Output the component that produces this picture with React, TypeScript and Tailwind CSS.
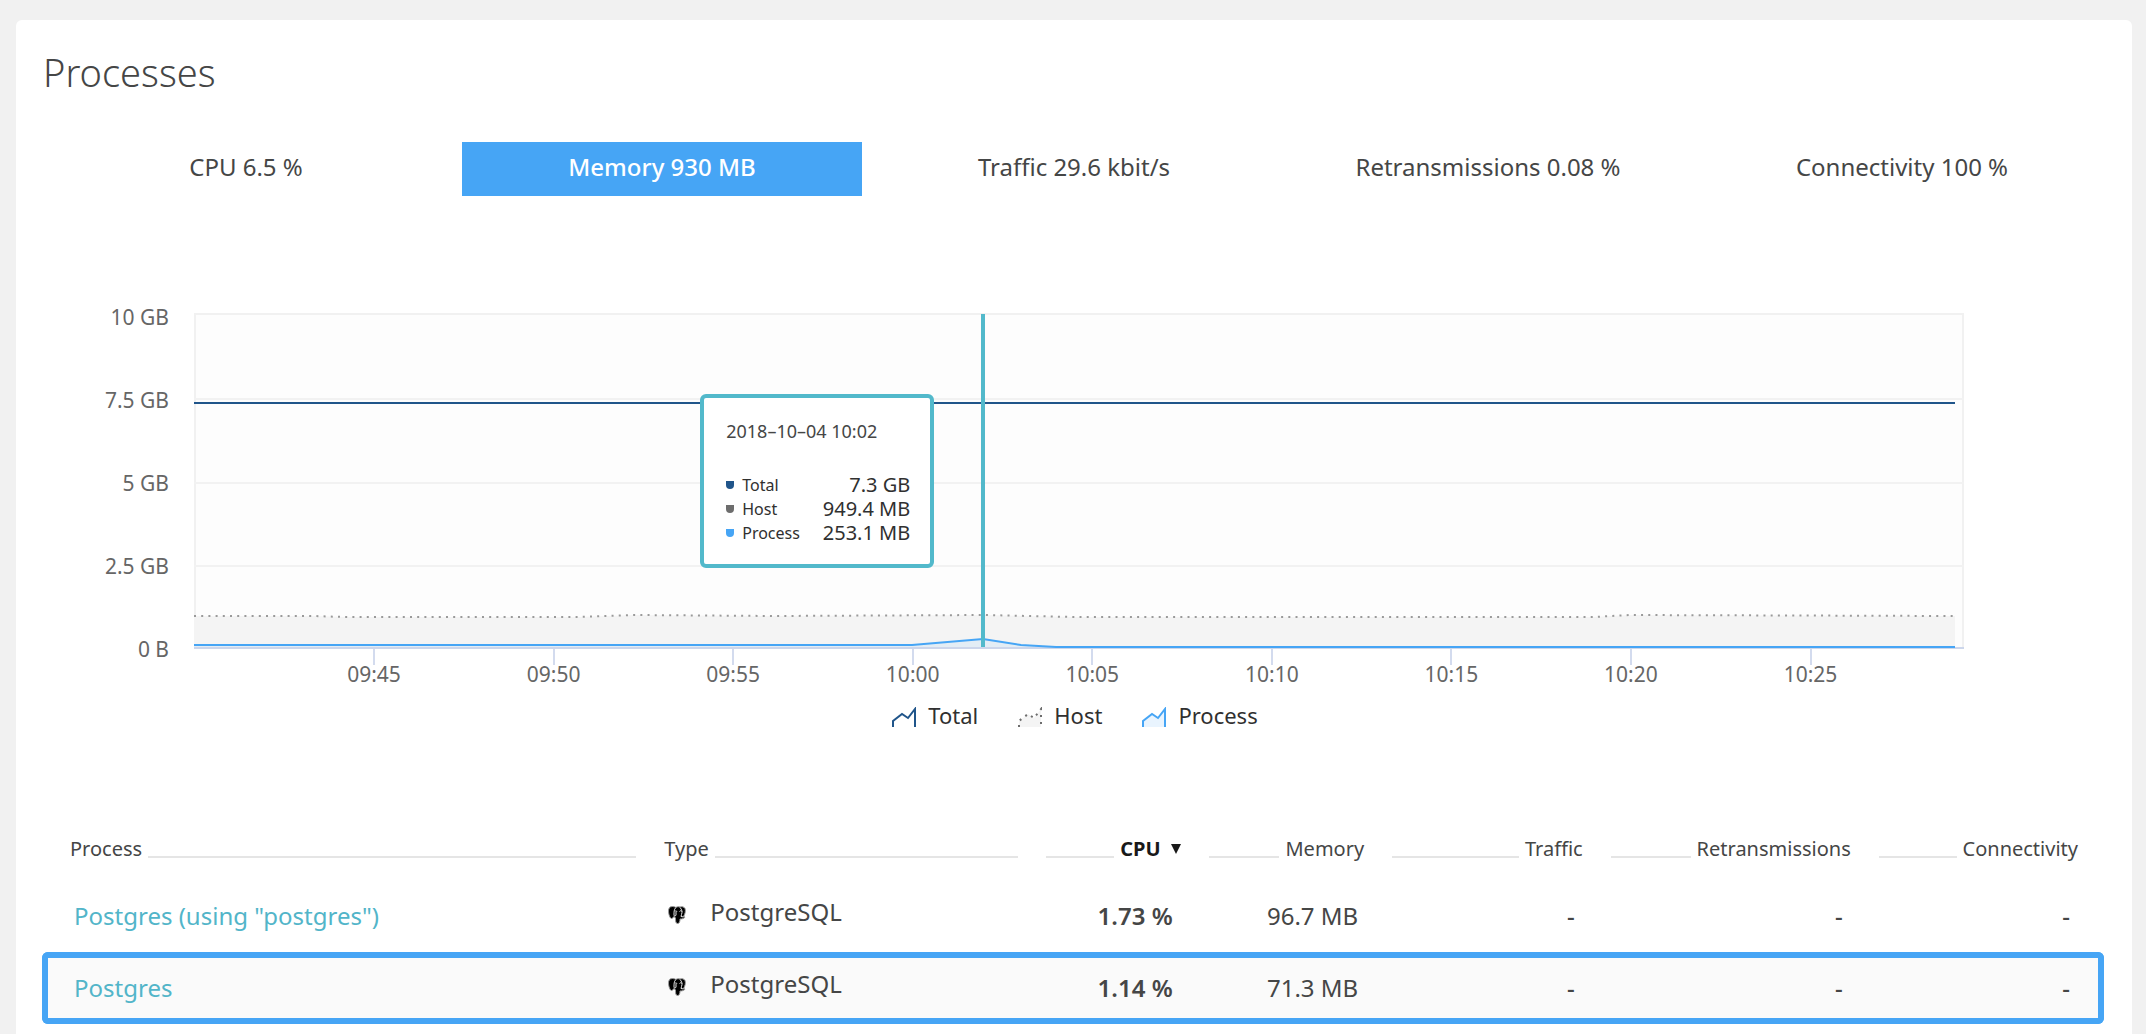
import React, { useState } from "react";

const metrics = [
  "CPU 6.5 %",
  "Memory 930 MB",
  "Traffic 29.6 kbit/s",
  "Retransmissions 0.08 %",
  "Connectivity 100 %",
];

const yTicks = ["10 GB", "7.5 GB", "5 GB", "2.5 GB", "0 B"];
const xTicks = ["09:45", "09:50", "09:55", "10:00", "10:05", "10:10", "10:15", "10:20", "10:25"];

const tooltipRows = [
  { label: "Total", value: "7.3 GB", dot: "bg-[#20558a]" },
  { label: "Host", value: "949.4 MB", dot: "bg-[#6d6d6d]" },
  { label: "Process", value: "253.1 MB", dot: "bg-[#46a5f5]" },
];

const legend = [
  { label: "Total", stroke: "#20558a", fill: "none", dash: undefined },
  { label: "Host", stroke: "#6d6d6d", fill: "#f4f4f4", dash: "2 5" },
  { label: "Process", stroke: "#46a5f5", fill: "#e9f4fe", dash: undefined },
];

const columns = [
  { label: "Process", width: "w-[29.5%]", left: true },
  { label: "Type", width: "w-[18.5%]", left: true },
  { label: "CPU", width: "w-[7.9%]", sorted: true },
  { label: "Memory", width: "w-[8.9%]" },
  { label: "Traffic", width: "w-[10.6%]" },
  { label: "Retransmissions", width: "w-[13%]" },
  { label: "Connectivity", width: "w-[11.6%]" },
];

const rows = [
  { name: 'Postgres (using "postgres")', cpu: "1.73 %", memory: "96.7 MB", selected: false },
  { name: "Postgres", cpu: "1.14 %", memory: "71.3 MB", selected: true },
];

const HOST = "0,303 120,303 150,304 385,304 440,302 580,303 790,302 880,304 1180,304 1400,304 1435,302 1761,303";
const PROCESS = "0,332 718,332 789,326 827,332 862,334 1761,334";

function ElephantIcon() {
  return (
    <svg className="mt-1.5 h-[18px] w-[18px]" viewBox="0 0 36 36" aria-hidden="true">
      <path
        d="M9 1C3 1 1 5 1 10C1 16 4 25 7 25C9 25 10 23 12 21L15 24C15 29 15 35 19 35C23 35 24 31 24 26C28 26 33 25 34 22L31 21C34 17 36 9 34 5C32 1 27 1 24 2C21 1 18 1 16 3C14 2 12 1 9 1Z"
        fill="#000"
        stroke="#9a9a9a"
        strokeWidth="2"
      />
      <path
        d="M15 4C12 7 12 12 12 18C12 21 15 21 16 18V12M24 3C28 7 29 12 27 17L26 21L31 22M23 11C24 9 27 9 28 11M14 11C15 9 18 10 18 12"
        fill="none"
        stroke="#e8e8e8"
        strokeWidth="2"
      />
    </svg>
  );
}

function MetricTabs() {
  const [active, setActive] = useState(1);
  return (
    <div className="grid grid-cols-5 gap-3.5 pl-1.5" role="tablist">
      {metrics.map((m, i) => (
        <button
          key={m}
          type="button"
          role="tab"
          aria-selected={i === active}
          onClick={() => setActive(i)}
          className={
            i === active
              ? "h-[54px] cursor-pointer bg-[#46a5f5] pb-1 text-2xl font-medium text-white"
              : "h-[54px] cursor-pointer pr-1 pb-1 text-2xl text-[#454646]"
          }
        >
          {m}
        </button>
      ))}
    </div>
  );
}

function Tooltip() {
  return (
    <div className="absolute top-[81px] left-[28.6%] h-[174px] w-[234px] rounded-md border-4 border-[#52b9cb] bg-white pt-[21px] pr-5 pl-[22px] text-[#303030]">
      <p className="text-lg leading-6 text-[#454646]">2018–10–04 10:02</p>
      <dl className="mt-[30px]">
        {tooltipRows.map((r) => (
          <div key={r.label} className="flex h-6 items-center">
            <span className={`mr-2 h-2 w-2 rounded-b-full ${r.dot}`} />
            <dt className="flex-1 text-base leading-6">{r.label}</dt>
            <dd className="text-xl leading-6">{r.value}</dd>
          </div>
        ))}
      </dl>
    </div>
  );
}

function Chart() {
  return (
    <section className="mt-[109px]" aria-label="Memory usage">
      <div className="flex pr-[140px]">
        <div className="flex h-[356px] w-[127px] flex-col justify-between text-right text-[21px] leading-6 text-[#666]">
          {yTicks.map((t) => (
            <span key={t}>{t}</span>
          ))}
        </div>
        <div className="mt-2 ml-[25px] flex-1">
          <div className="relative h-[336px]">
            <svg className="block h-full w-full" viewBox="0 0 1770 336" preserveAspectRatio="none">
              <rect x="1" y="1" width="1768" height="334" fill="#fdfdfd" stroke="#f1f1f1" strokeWidth="2" />
              <path d="M0 86H1770M0 170H1770M0 253H1770" stroke="#f2f2f2" strokeWidth="2" />
              <polygon points={`0,335 ${HOST} 1761,335`} fill="#f4f4f4" />
              <polygon points={`0,335 ${PROCESS} 1761,335`} fill="#e3edf5" />
              <path d="M0 335H1770" stroke="#ccd6eb" strokeWidth="2" />
              <path d="M0 90H1761" stroke="#20558a" strokeWidth="2" />
              <polyline points={HOST} fill="none" stroke="#9a9a9a" strokeWidth="2" strokeDasharray="2 5.2" />
              <polyline points={PROCESS} fill="none" stroke="#46a5f5" strokeWidth="2" />
              <path d="M789 1V334" stroke="#52b9cb" strokeWidth="4" />
            </svg>
            <Tooltip />
          </div>
          <div className="grid grid-cols-9 pr-[3.6%] pl-[5.1%] text-[21px] leading-[18px] text-[#666]">
            {xTicks.map((t) => (
              <div key={t} className="flex flex-col items-center">
                <span className="h-4 w-0.5 bg-[#d3dbee]" />
                <span>{t}</span>
              </div>
            ))}
          </div>
        </div>
      </div>
      <div className="mt-4 flex justify-center gap-10 pl-1 text-[22px] leading-8 text-[#303030]">
        {legend.map((l) => (
          <button key={l.label} type="button" className="flex cursor-pointer items-center gap-3">
            <svg className="mt-1 h-5 w-6" viewBox="0 0 24 20">
              <path
                d="M1 20V14L10 7L16 11L23 2V20"
                fill={l.fill}
                stroke={l.stroke}
                strokeWidth="2"
                strokeDasharray={l.dash}
              />
            </svg>
            {l.label}
          </button>
        ))}
      </div>
    </section>
  );
}

function ProcessTable() {
  return (
    <table className="mt-[104px] w-full table-fixed border-separate border-spacing-0 text-[#454646]">
      <thead>
        <tr>
          {columns.map((c, i) => (
            <th
              key={c.label}
              scope="col"
              className={`${c.width} h-[45px] p-0 pr-3.5 align-top text-xl leading-7 font-normal ${
                i === 0 ? "pl-7" : i === columns.length - 1 ? "pr-[26px] pl-3.5" : "pl-3.5"
              }`}
            >
              <div className="flex items-end gap-1.5">
                {!c.left && <span className="mb-[5px] h-0.5 flex-1 bg-[#e5e5e5]" />}
                {c.sorted ? (
                  <button type="button" className="flex cursor-pointer items-center gap-2.5 font-bold text-[#191919]">
                    {c.label}
                    <svg className="h-2.5 w-2.5" viewBox="0 0 10 10">
                      <path d="M0 0H10L5 10Z" fill="#191919" />
                    </svg>
                  </button>
                ) : (
                  <button type="button" className="cursor-pointer">
                    {c.label}
                  </button>
                )}
                {c.left && <span className="mb-[5px] h-0.5 flex-1 bg-[#e5e5e5]" />}
              </div>
            </th>
          ))}
        </tr>
      </thead>
      <tbody className="text-2xl">
        {rows.map((r) => {
          const cell = r.selected
            ? "h-[72px] border-y-6 border-[#46a5f5] bg-[#fafafa]"
            : "h-[72px] border-y-6 border-transparent";
          return (
            <tr key={r.name}>
              <td className={`${cell} rounded-l-md border-l-6 pl-[26px]`}>
                <a href="#process" className="text-[#52b5c9]">
                  {r.name}
                </a>
              </td>
              <td className={`${cell} pl-[18px]`}>
                <div className="flex items-center gap-6 pb-2">
                  <ElephantIcon />
                  <span>PostgreSQL</span>
                </div>
              </td>
              <td className={`${cell} pr-[22px] text-right font-semibold`}>{r.cpu}</td>
              <td className={`${cell} pr-5 text-right`}>{r.memory}</td>
              <td className={`${cell} pr-[22px] text-right font-medium`}>-</td>
              <td className={`${cell} pr-[22px] text-right font-medium`}>-</td>
              <td className={`${cell} rounded-r-md border-r-6 pr-7 text-right font-medium`}>-</td>
            </tr>
          );
        })}
      </tbody>
    </table>
  );
}

export default function App() {
  return (
    <div className="min-h-screen bg-[#f1f1f1] pt-5 pr-3.5 pl-4 font-['Noto_Sans','Open_Sans',sans-serif]">
      <main className="rounded-t-md bg-white pr-7 pb-3 pl-[26px]">
        <h1 className="pt-[22px] pl-px text-[38px] leading-[60px] font-light text-[#454646]">Processes</h1>
        <div className="mt-10">
          <MetricTabs />
        </div>
        <Chart />
        <ProcessTable />
      </main>
    </div>
  );
}
